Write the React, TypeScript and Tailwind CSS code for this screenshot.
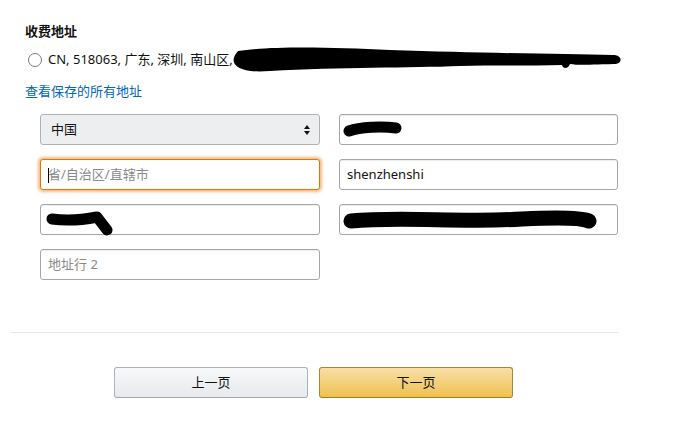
import React from "react";

const font = { fontFamily: '"Noto Sans", "Noto Sans CJK SC", sans-serif' };

function Field({
  value,
  placeholder,
  focused,
  children,
}: {
  value?: string;
  placeholder?: string;
  focused?: boolean;
  children?: React.ReactNode;
}) {
  return (
    <div
      className={
        "relative h-[31px] rounded-[3px] border bg-white flex items-center pl-[7px] text-[13px] " +
        (focused
          ? "border-[#e77600] shadow-[0_0_3px_2px_rgba(228,121,17,0.5)]"
          : "border-[#a6a6a6] shadow-[inset_0_1px_0_rgba(0,0,0,0.07)]")
      }
    >
      {focused && <span className="absolute left-[7px] top-[8px] w-px h-[15px] bg-black" />}
      {value ? (
        <span className="text-[#111]">{value}</span>
      ) : (
        <span className="text-[#8a8a8a]">{placeholder}</span>
      )}
      {children}
    </div>
  );
}

export default function App() {
  return (
    <div className="w-[684px] h-[432px] bg-white overflow-hidden text-[#111]" style={font}>
      <div className="pl-[25px] pt-[22px]">
        <h3 className="text-[13px] font-bold leading-[18px]">收费地址</h3>
        <div className="relative mt-[11px] flex items-center h-[18px] text-[13px]">
          <span className="ml-[3px] w-[14px] h-[14px] rounded-full border border-[#7a7a7a] bg-white" />
          <span className="ml-[6px]">CN, 518063, 广东, 深圳, 南山区,</span>
          <svg className="absolute left-[205px] top-[-8px]" width="400" height="34" viewBox="0 0 400 34">
            <path
              d="M8 8 C40 3, 100 4, 160 7 C250 10, 330 11, 383 12 C393 12, 393 21, 384 21 C350 22, 345 22, 340 21 C338 26, 333 26, 332 22 C300 23, 260 22, 230 23 C180 25, 110 24, 40 28 C6 31, -3 20, 8 8 Z"
              fill="#000"
            />
          </svg>
        </div>
        <a className="mt-[13px] block text-[13px] leading-[18px] text-[#0066c0]">查看保存的所有地址</a>
      </div>

      <div className="ml-[40px] mt-[14px] grid grid-cols-[280px_279px] gap-x-[19px] gap-y-[14px]">
        <div className="h-[31px] rounded-[3px] border border-[#adb1b8] bg-[#eceef0] flex items-center justify-between pl-[10px] pr-[9px] text-[13px]">
          <span>中国</span>
          <span className="flex flex-col items-center gap-[2px]">
            <span className="w-0 h-0 border-x-[3px] border-x-transparent border-b-[4px] border-b-[#111]" />
            <span className="w-0 h-0 border-x-[3px] border-x-transparent border-t-[4px] border-t-[#111]" />
          </span>
        </div>
        <Field value=" ">
          <svg className="absolute left-[2px] top-[4px]" width="64" height="22" viewBox="0 0 64 22">
            <path d="M7 12 C18 8, 40 7, 54 9" stroke="#000" strokeWidth="11" strokeLinecap="round" fill="none" />
          </svg>
        </Field>
        <Field placeholder="省/自治区/直辖市" focused />
        <Field value="shenzhenshi" />
        <Field value=" ">
          <svg className="absolute left-[3px] top-[4px]" width="72" height="28" viewBox="0 0 72 28">
            <path d="M8 10 C22 12, 38 11, 53 8 L63 21" stroke="#000" strokeWidth="11" strokeLinecap="round" strokeLinejoin="round" fill="none" />
          </svg>
        </Field>
        <Field value=" ">
          <svg className="absolute left-[2px] top-[3px]" width="258" height="26" viewBox="0 0 258 26">
            <path d="M9 13 C60 8, 120 15, 180 11 C220 9, 240 10, 247 13" stroke="#000" strokeWidth="15" strokeLinecap="round" fill="none" />
          </svg>
        </Field>
        <Field placeholder="地址行 2" />
      </div>

      <div className="ml-[10px] mt-[52px] w-[608px] border-t border-[#e7e7e7]" />

      <div className="ml-[114px] mt-[34px] flex gap-[11px]">
        <button className="w-[194px] h-[31px] rounded-[3px] border border-[#adb1b8] border-b-[#a2a6ac] bg-gradient-to-b from-[#f7f8fa] to-[#e7e9ec] text-[13px] text-[#111]">
          上一页
        </button>
        <button className="w-[194px] h-[31px] rounded-[3px] border border-[#a88734] border-b-[#9c7e31] bg-gradient-to-b from-[#f7dfa5] to-[#f0c14b] text-[13px] text-[#111]">
          下一页
        </button>
      </div>
    </div>
  );
}
